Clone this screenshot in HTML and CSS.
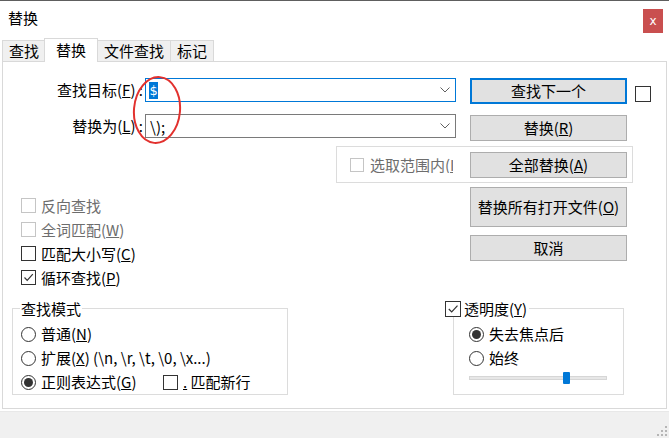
FILE: index.html
```html
<!DOCTYPE html>
<html lang="zh-CN">
<head>
<meta charset="utf-8">
<title>替换</title>
<link rel="stylesheet" href="styles.css">
</head>
<body>
<div class="window">
  <div class="titlebar">
    <span class="title">替换</span>
    <span class="close">x</span>
  </div>
  <div class="tabs">
    <div class="tab">查找</div>
    <div class="tab active">替换</div>
    <div class="tab">文件查找</div>
    <div class="tab">标记</div>
  </div>
  <div class="panel">
    <div class="row">
      <div class="lbl">查找目标(<u>F</u>) :</div>
      <div class="combo focus"><span class="sel">$</span>
        <svg class="chev" width="10" height="6" viewBox="0 0 10 6"><path d="M0.5 0.5 L5 5 L9.5 0.5" fill="none" stroke="#606060" stroke-width="1"/></svg>
      </div>
      <div class="btn default">查找下一个</div>
      <span class="chk side"></span>
    </div>
    <div class="row row2">
      <div class="lbl">替换为(<u>L</u>) :</div>
      <div class="combo"><span class="val">\);</span>
        <svg class="chev" width="10" height="6" viewBox="0 0 10 6"><path d="M0.5 0.5 L5 5 L9.5 0.5" fill="none" stroke="#606060" stroke-width="1"/></svg>
      </div>
      <div class="btn b2">替换(<u>R</u>)</div>
    </div>
    <div class="selbox">
      <span class="chk disabled"></span>
      <span class="seltext">选取范围内(<u>I</u>)</span>
      <div class="btn b3">全部替换(<u>A</u>)</div>
    </div>
    <div class="mid">
      <div class="opts">
        <div class="cb-row dis"><span class="chk disabled"></span><span class="txt">反向查找</span></div>
        <div class="cb-row dis"><span class="chk disabled"></span><span class="txt">全词匹配(<u>W</u>)</span></div>
        <div class="cb-row"><span class="chk"></span><span class="txt">匹配大小写(<u>C</u>)</span></div>
        <div class="cb-row"><span class="chk"><svg width="13" height="13" viewBox="0 0 13 13"><path d="M2.5 6.5 L5.2 9.3 L10.8 3.2" fill="none" stroke="#333" stroke-width="1.2"/></svg></span><span class="txt">循环查找(<u>P</u>)</span></div>
      </div>
      <div class="btncol">
        <div class="btn tall">替换所有打开文件(<u>O</u>)</div>
        <div class="btn cancel">取消</div>
      </div>
    </div>
    <div class="bottom">
      <div class="group mode">
        <div class="legend">查找模式</div>
        <div class="radio-row first"><span class="radio"></span><span class="txt">普通(<u>N</u>)</span></div>
        <div class="radio-row"><span class="radio"></span><span class="txt">扩展(<u>X</u>) (\n, \r, \t, \0, \x...)</span></div>
        <div class="radio-row"><span class="radio on"></span><span class="txt regex">正则表达式(<u>G</u>)</span><span class="chk"></span><span class="txt nl"><u>.</u> 匹配新行</span></div>
      </div>
      <div class="group trans">
        <div class="legend tlegend"><span class="chk"><svg width="14" height="14" viewBox="0 0 14 14"><path d="M2.8 7 L5.7 9.9 L11.5 3.6" fill="none" stroke="#333" stroke-width="1.2"/></svg></span><span class="txt">透明度(<u>Y</u>)</span></div>
        <div class="radio-row first"><span class="radio on"></span><span class="txt">失去焦点后</span></div>
        <div class="radio-row"><span class="radio"></span><span class="txt">始终</span></div>
        <div class="slider"><div class="track"></div><div class="thumb"></div></div>
      </div>
    </div>
    <svg class="annot" width="52" height="74" viewBox="0 0 52 74"><ellipse cx="25" cy="36" rx="23" ry="33" transform="rotate(5 25 36)" fill="none" stroke="#e2312e" stroke-width="2"/></svg>
  </div>
  <div class="footer">
    <svg width="12" height="12" viewBox="0 0 12 12" fill="#b5b5b5"><rect x="9" y="1" width="2" height="2"/><rect x="9" y="5" width="2" height="2"/><rect x="5" y="5" width="2" height="2"/><rect x="9" y="9" width="2" height="2"/><rect x="5" y="9" width="2" height="2"/><rect x="1" y="9" width="2" height="2"/></svg>
  </div>
</div>
</body>
</html>
```

FILE: styles.css
```css
* { box-sizing: border-box; }
html, body { margin: 0; padding: 0; }
body {
  width: 669px;
  height: 438px;
  overflow: hidden;
  background: #fff;
  font-family: "Noto Sans CJK SC", "Noto Sans", sans-serif;
  font-size: 15px;
  color: #000;
}
u { text-decoration: underline; text-underline-offset: 1px; }
.window {
  height: 438px;
  display: flex;
  flex-direction: column;
  border-top: 1px solid #5e5e5e;
}
.titlebar {
  height: 37px;
  display: flex;
  align-items: center;
  padding-left: 8px;
  flex: none;
}
.title { line-height: 16px; margin-top: -3px; }
.close {
  margin-left: auto;
  margin-right: 6px;
  margin-top: 3px;
  width: 20px;
  height: 24px;
  background: #c94f4f;
  color: #fff;
  font-family: "DejaVu Sans", sans-serif;
  font-size: 12px;
  display: flex;
  align-items: center;
  justify-content: center;
}
.tabs {
  height: 23px;
  display: flex;
  align-items: flex-end;
  padding-left: 2px;
  flex: none;
}
.tab {
  height: 21px;
  padding: 0 6px;
  border: 1px solid #d9d9d9;
  border-bottom: none;
  background: #f0f0f0;
  line-height: 20px;
  margin-right: -1px;
  white-space: nowrap;
}
.tab.active {
  height: 24px;
  margin: 0 -1px -1px -1px;
  padding: 0 11px;
  background: #fff;
  position: relative;
  z-index: 1;
  line-height: 22px;
}
.panel {
  position: relative;
  margin: 0 2px;
  height: 348px;
  border: 1px solid #d9d9d9;
  background: #fff;
  padding-top: 16px;
  flex: none;
}
.row { display: flex; align-items: flex-start; }
.row2 { margin-top: 10px; }
.lbl {
  width: 140px;
  height: 24px;
  line-height: 24px;
  text-align: right;
  white-space: nowrap;
}
.combo {
  width: 311px;
  height: 24px;
  margin-left: 2px;
  border: 1px solid #7a7a7a;
  display: flex;
  align-items: center;
  padding-left: 3px;
  background: #fff;
}
.combo.focus { border-color: #0078d7; }
.sel {
  background: #0078d7;
  color: #fff;
  font-family: "DejaVu Sans", sans-serif;
  font-size: 13px;
  line-height: 17px;
  padding: 0 0.5px;
}
.val { padding-left: 1px; line-height: 17px; }
.chev { margin-left: auto; margin-right: 5px; }
.btn {
  width: 157px;
  height: 26px;
  margin-left: 14px;
  background: #e1e1e1;
  border: 1px solid #adadad;
  display: flex;
  align-items: center;
  justify-content: center;
  line-height: 16px;
  white-space: nowrap;
  flex: none;
}
.btn.default { border: 2px solid #0078d7; }
.btn.b2 { margin-top: 1px; }
.chk {
  width: 15px;
  height: 15px;
  border: 1px solid #333;
  background: #fff;
  flex: none;
  display: flex;
  align-items: center;
  justify-content: center;
}
.chk.side { width: 16px; height: 16px; margin-left: 8px; margin-top: 8px; }
.chk.disabled { border-color: #c5c5c5; }
.selbox {
  margin-top: 5px;
  margin-left: 333px;
  width: 297px;
  height: 37px;
  border: 1px solid #dcdcdc;
  display: flex;
  align-items: center;
  padding-left: 13px;
}
.selbox .chk { width: 14px; height: 14px; }
.seltext {
  margin-left: 6px;
  width: 83px;
  overflow: hidden;
  white-space: nowrap;
  color: #6d6d6d;
  line-height: 17px;
  flex: none;
}
.btn.b3 { margin-left: 17px; }
.mid { display: flex; margin-top: 4px; }
.opts { width: 467px; padding-top: 11px; padding-left: 18px; }
.cb-row {
  display: flex;
  align-items: center;
  height: 15px;
  margin-bottom: 9px;
}
.txt { margin-left: 5px; line-height: 16px; white-space: nowrap; }
.cb-row.dis .txt { color: #6d6d6d; }
.btncol { display: flex; flex-direction: column; }
.btncol .btn { margin-left: 0; }
.btn.tall { height: 40px; }
.btn.cancel { margin-top: 8px; }
.bottom { display: flex; margin-top: 14px; }
.group {
  height: 87px;
  border: 1px solid #dcdcdc;
  display: flex;
  flex-direction: column;
  align-items: flex-start;
}
.group.mode { margin-left: 9px; width: 276px; }
.group.trans { margin-left: 165px; width: 171px; }
.legend {
  height: 17px;
  line-height: 17px;
  margin: -9px 0 5px 7px;
  padding: 0 1px;
  background: #fff;
  white-space: nowrap;
}
.legend.tlegend {
  margin-left: -9px;
  display: flex;
  align-items: center;
  padding: 0 2px 0 0;
}
.tlegend .chk { width: 16px; height: 16px; margin-top: 1px; }
.tlegend .txt { margin-left: 3px; }
.radio-row {
  height: 24px;
  display: flex;
  align-items: center;
  padding-left: 8px;
}
.trans .radio-row { padding-left: 15px; }
.radio {
  width: 15px;
  height: 15px;
  border: 1px solid #333;
  border-radius: 50%;
  background: #fff;
  flex: none;
  display: flex;
  align-items: center;
  justify-content: center;
}
.radio.on::after {
  content: "";
  width: 9px;
  height: 9px;
  border-radius: 50%;
  background: #333;
}
.txt.regex { width: 122px; }
.txt.nl { margin-left: 5px; }
.slider {
  position: relative;
  margin: 1px 0 0 15px;
  width: 138px;
  height: 14px;
  display: flex;
  align-items: center;
}
.track {
  width: 138px;
  height: 4px;
  background: #e7e7e7;
  border: 1px solid #d6d6d6;
}
.thumb {
  position: absolute;
  left: 94px;
  top: 1px;
  width: 7px;
  height: 12px;
  background: #0078d7;
  border-radius: 1px;
}
.annot {
  position: absolute;
  left: 129px;
  top: 12px;
}
.footer {
  flex: 1;
  margin-top: 2px;
  background: #f0f0f0;
  border-top: 1px solid #e8e8e8;
  display: flex;
  justify-content: flex-end;
  align-items: flex-end;
  padding: 0 1px 1px 0;
}
```
